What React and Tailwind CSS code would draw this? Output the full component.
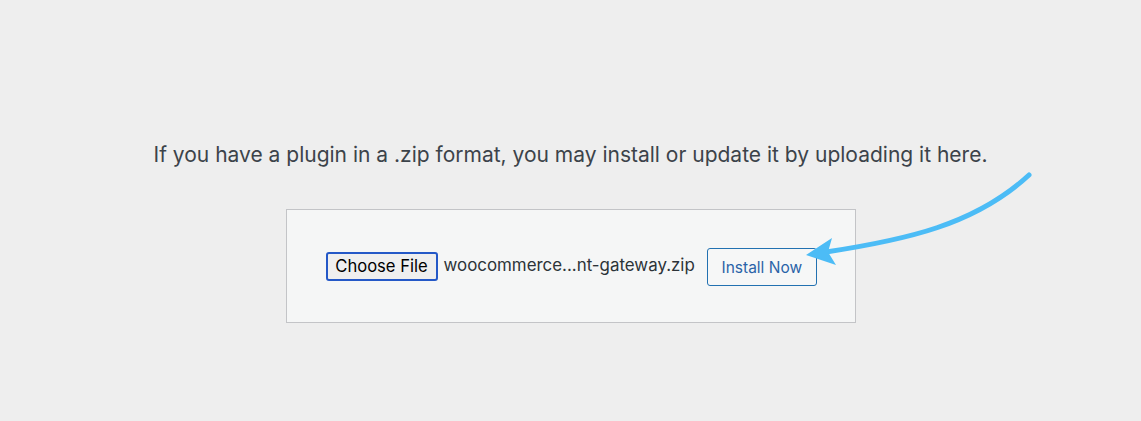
export default function App() {
  return (
    <div
      className="relative h-[421px] w-full overflow-hidden bg-[#eeeeee]"
      style={{ fontFamily: 'Inter, "Liberation Sans", Arial, sans-serif' }}
    >
      <div className="flex flex-col items-center pt-[140px]">
        <p className="text-[21px] leading-[30px] text-[#3c434a]">
          If you have a plugin in a .zip format, you may install or update it by uploading it here.
        </p>

        {/* Upload box */}
        <div className="mt-[39px] flex h-[114px] w-[570px] items-center border border-[#c3c4c7] bg-[#f5f6f6] pl-[39px]">
          <button className="h-[29px] w-[112px] rounded-[3px] border-2 border-[#2458c7] bg-[#efefef] text-[16.6px] leading-none text-black">
            Choose File
          </button>
          <span className="ml-[6px] text-[16.9px] text-[#2c3338]">woocommerce...nt-gateway.zip</span>
          <button className="ml-[12px] mt-[1px] h-[38px] w-[110px] rounded-[3px] border border-[#2271b1] bg-[#f6f7f7] pt-[2px] text-[15.5px] text-[#2a63a8]">
            Install Now
          </button>
        </div>
      </div>

      {/* Annotation arrow */}
      <svg className="pointer-events-none absolute inset-0" width="1141" height="421" viewBox="0 0 1141 421">
        <path
          d="M1029 175 C 975 225, 905 240, 826 252"
          fill="none"
          stroke="#4cbcf6"
          strokeWidth="5"
          strokeLinecap="round"
        />
        <polygon points="806,255 832,238 828,252 836,265" fill="#4cbcf6" />
      </svg>
    </div>
  );
}
